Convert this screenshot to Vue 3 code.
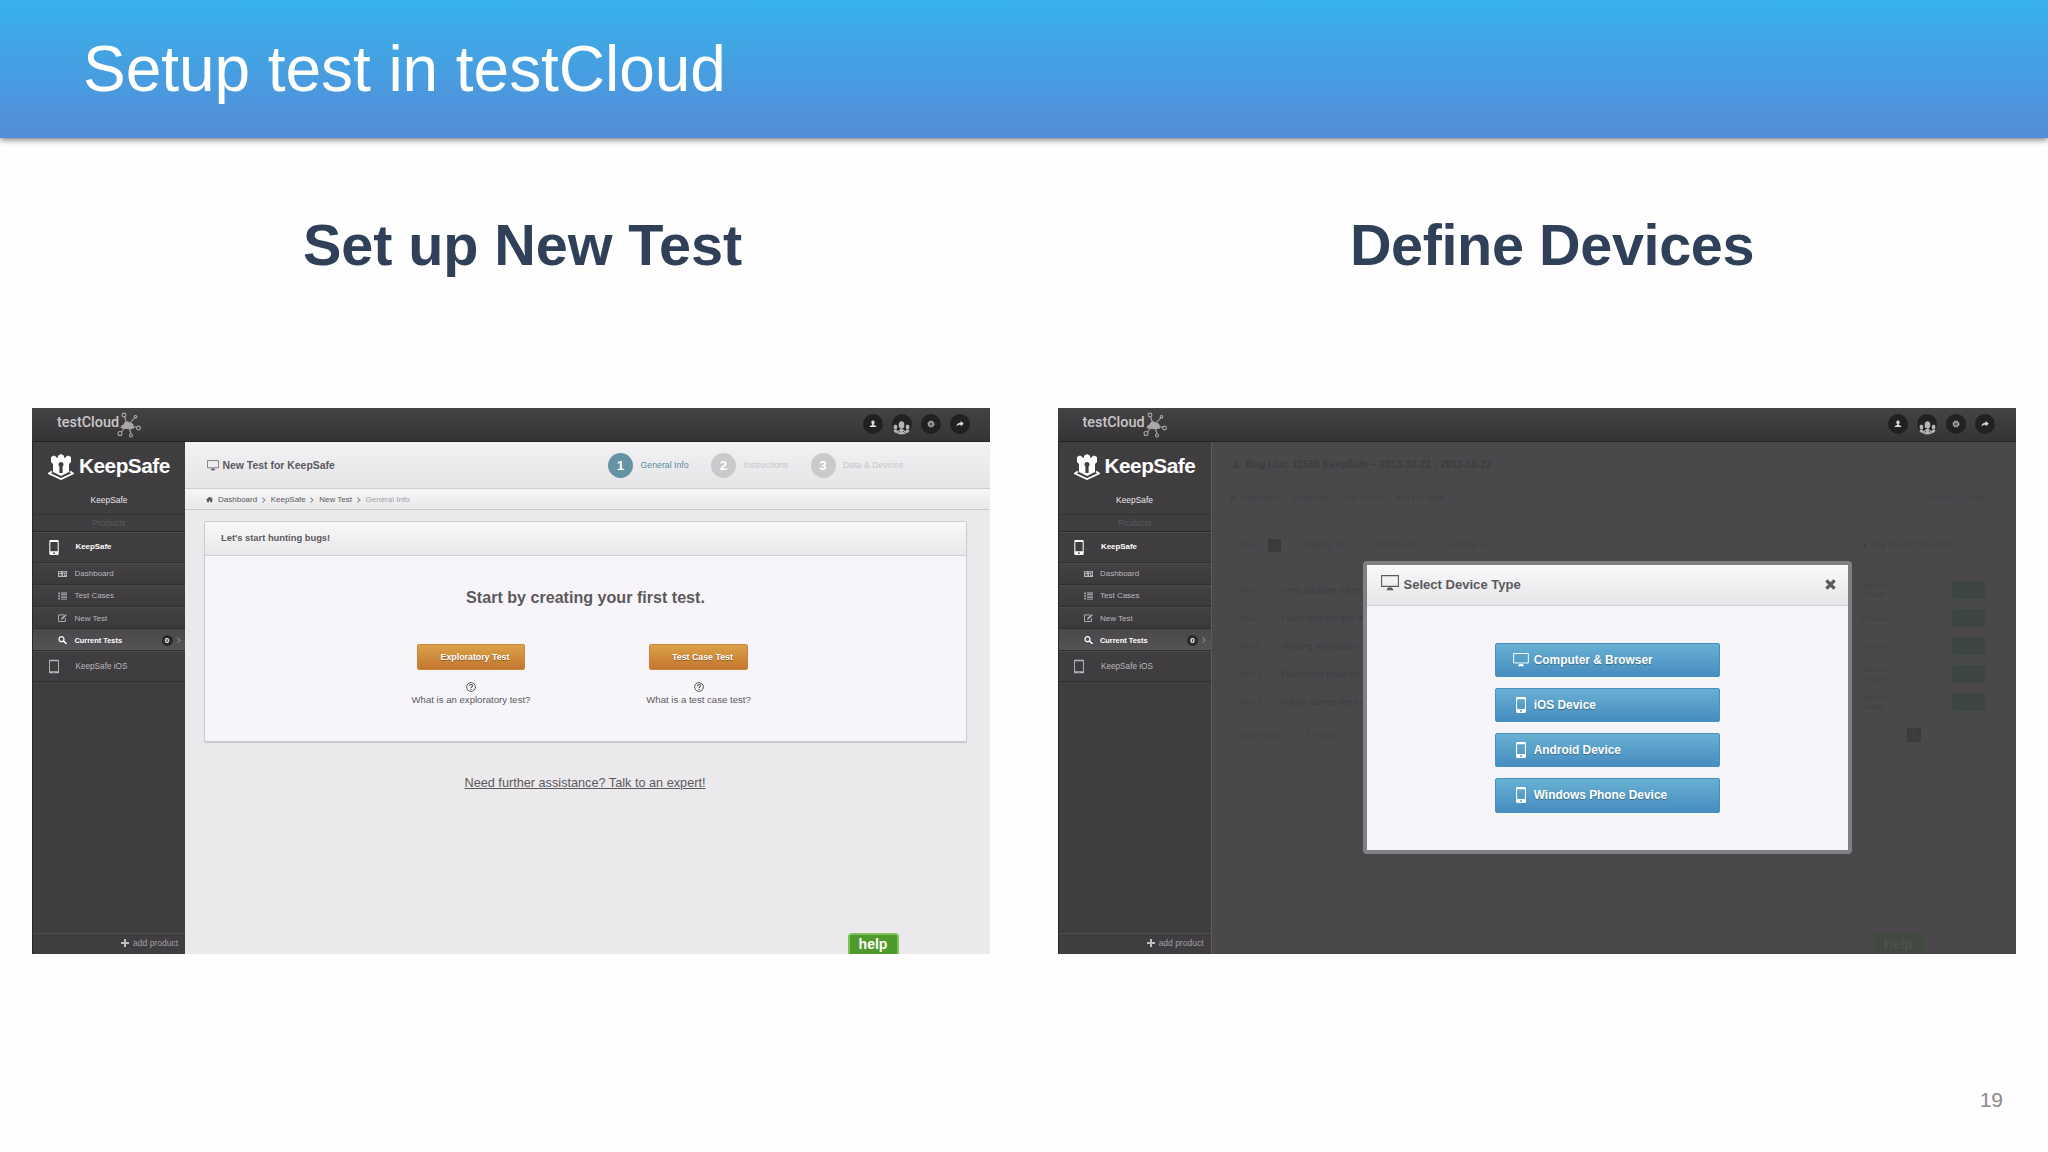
<template>
  <div class="slide">
    <svg class="sprite" width="0" height="0">
      <symbol id="i-monitor" viewBox="0 0 18 16">
        <path d="M.6.6h16.8v10.8H.6z" fill="none" stroke="currentColor" stroke-width="1.1" />
        <path d="M7 12.6h4l1.6 2.6H5.4z" fill="currentColor" />
      </symbol>
      <symbol id="i-phone" viewBox="0 0 10 16">
        <path fill-rule="evenodd" fill="currentColor" d="M1.4 0h7.2Q10 0 10 1.4v13.2Q10 16 8.6 16H1.4Q0 16 0 14.6V1.4Q0 0 1.4 0zM1.1 2.2v9.9h7.8V2.2zM5 13.1a.9.9 0 1 0 0 1.8.9.9 0 0 0 0-1.8z" />
      </symbol>
      <symbol id="i-tablet" viewBox="0 0 11 15">
        <path fill-rule="evenodd" fill="currentColor" d="M1 0h9q1 0 1 1v13q0 1-1 1H1q-1 0-1-1V1q0-1 1-1zM1 1.7v11h9v-11zM5.5 13.2a.6.6 0 1 0 0 1.2.6.6 0 0 0 0-1.2z" />
      </symbol>
      <symbol id="i-dashboard" viewBox="0 0 9 7">
        <path fill-rule="evenodd" fill="currentColor" d="M0 .4h9v6.2H0zM.8 1.3v1.2h2V1.3zM1.2 3.4v1.8h2.2V3.4zM4.4 1.3v.7h3.8v-.7zM5 3v2.4h1.2V3zM7 3v1.6h1.2V3z" />
      </symbol>
      <symbol id="i-list" viewBox="0 0 9 8">
        <path fill="currentColor" d="M.3.6h1.6v1.6H.3zM.3 3.2h1.6v1.6H.3zM.3 5.8h1.6v1.6H.3zM3 .5h6v.9H3zM3 2.2h6V3H3zM3 3.8h6v.8H3zM3 5.3h6v.8H3zM3 6.8h6v.8H3z" />
      </symbol>
      <symbol id="i-edit" viewBox="0 0 9 8">
        <path d="M6.2.9H.5v6.6h6.900V4.200" fill="none" stroke="currentColor" stroke-width=".9" />
        <path d="M3 5.7l.4-1.700L7.700.2l1 1L4.600 5.200z" fill="currentColor" />
      </symbol>
      <symbol id="i-search" viewBox="0 0 9 8">
        <circle cx="3.5" cy="3.2" r="2.5" fill="none" stroke="currentColor" stroke-width="1.2" />
        <path d="M5.3 4.9l2.9 2.6" stroke="currentColor" stroke-width="1.5" stroke-linecap="round" />
      </symbol>
      <symbol id="i-home" viewBox="0 0 8 7">
        <path fill="currentColor" d="M0 3.8L4 .3l1.5 1.3V.8h1v1.7L8 3.8l-.5.5L7 3.9v2.8H4.8V4.6H3.4v2.1H1.1V3.9l-.6.4z" />
      </symbol>
      <symbol id="i-user" viewBox="0 0 8 8">
        <path fill="currentColor" d="M4 .4c1.2 0 1.7.9 1.6 2-.1.9-.4 1.5-.8 1.9v.6c1.4.3 2.6.7 2.6 2.2H.6c0-1.5 1.2-1.9 2.6-2.2v-.6c-.4-.4-.7-1-.8-1.9-.1-1.1.4-2 1.6-2z" />
      </symbol>
      <symbol id="i-users" viewBox="0 0 16 13">
        <g fill="currentColor">
          <ellipse cx="8" cy="3.7" rx="2.7" ry="3.5" />
          <ellipse cx="2.3" cy="5.6" rx="1.8" ry="2.5" />
          <ellipse cx="13.7" cy="5.6" rx="1.8" ry="2.5" />
          <path d="M.6 8.3l2.4-.5 1.3 1.600 2.700-2h2l2.700 2L13 7.800l2.400.5c0 1.700-1 2.600-2.600 2.700-.9 1-2.700 1.500-4.800 1.500S4.100 12 3.200 11C1.600 10.900.6 10 .6 8.300z" />
        </g>
        <path d="M5 10.700l1.700-1.500M11 10.700L9.300 9.200" stroke="#222" stroke-width=".7" />
      </symbol>
      <symbol id="i-gear" viewBox="0 0 8 8">
        <circle cx="4" cy="4" r="2.3" fill="none" stroke="currentColor" stroke-width="1.5" />
        <circle cx="4" cy="4" r="3.1" fill="none" stroke="currentColor" stroke-width="1" stroke-dasharray="1.3 1.13" />
        <circle cx="4" cy="4" r=".8" fill="currentColor" />
      </symbol>
      <symbol id="i-share" viewBox="0 0 8 8">
        <path fill="currentColor" d="M4.700 1L7.800 3.700 4.700 6.300V4.800C2.800 4.700 1.500 5.100.4 6.800.5 4.200 2 2.700 4.700 2.500z" />
      </symbol>
      <symbol id="i-plus" viewBox="0 0 8 8">
        <path fill="currentColor" d="M3 0h2v3h3v2H5v3H3V5H0V3h3z" />
      </symbol>
      <symbol id="i-close" viewBox="0 0 10 10">
        <path d="M1.300 1.300l7.400 7.400M8.700 1.300L1.300 8.700" stroke="currentColor" stroke-width="3" />
      </symbol>
      <symbol id="i-question" viewBox="0 0 10 10">
        <circle cx="5" cy="5" r="4.4" fill="none" stroke="currentColor" stroke-width="1" />
        <path d="M3.500 4c0-2 3.100-2 3.100-.2C6.600 5 5 4.900 5 6.200M5 6.900v1" fill="none" stroke="currentColor" stroke-width="1.1" />
      </symbol>
      <symbol id="i-splat" viewBox="0 0 24 26">
        <g fill="none" stroke="currentColor" stroke-width="1.1">
          <path d="M10 12L7.500 4.500M13 11l5-5.500M14 14l6 1.500M12 15l2 7M9 14l-4.500 6" />
          <circle cx="7" cy="3" r="1.9" />
          <circle cx="18.5" cy="4.8" r="1.3" />
          <circle cx="21.5" cy="16" r="1.9" />
          <circle cx="14" cy="23.5" r="1.5" />
          <circle cx="3" cy="21.5" r="2" />
        </g>
        <path fill="currentColor" d="M3.500 16c.3-2 1.500-3 3-3.500C7 9.500 11 8.500 13 11c2.500-.5 4.200 1.300 3.500 3.500 1 .8.500 2-.5 2.300-3 .7-9 .4-12.500-.8z" />
      </symbol>
      <symbol id="i-castle" viewBox="0 0 26 26">
        <path fill="#fff" d="M3 3l3-1.500L8.500 3v1L10 3.500V1.700L13 0l3 1.700v1.800l1.500.5V3L20 1.500 23 3v5l-2 2v8l-8 4-8-4v-8L3 8z" />
        <path fill="none" stroke="#fff" stroke-width="1.9" d="M4 17.500l-3 2L13 25l12-5.500-3-2" />
        <path fill="#3f3d40" d="M13 8a2.500 2.500 0 0 1 2.500 2.500c0 .9-.4 1.500-.9 2V19h-3.200v-6.500c-.5-.5-.9-1.100-.9-2A2.500 2.500 0 0 1 13 8z" />
      </symbol>
    </svg>

    <header class="slide-header">
      <h1>Setup test in testCloud</h1>
    </header>

    <main class="columns">
      <section v-for="panel in panels" :key="panel.id" class="column" :class="panel.id">
        <h2>{{ panel.heading }}</h2>

        <div class="app">
          <div class="topbar">
            <span class="brand">testCloud</span>
            <svg class="splat"><use href="#i-splat" /></svg>
            <div class="actions">
              <span v-for="icon in topIcons" :key="icon" class="round" :class="icon">
                <svg><use :href="'#i-' + icon" /></svg>
              </span>
            </div>
          </div>

          <div class="body">
            <aside class="sidebar">
              <div class="logo">
                <svg><use href="#i-castle" /></svg>
                <span>KeepSafe</span>
              </div>
              <div class="company">KeepSafe</div>
              <div class="products">Products</div>
              <div class="product active">
                <svg class="phone"><use href="#i-phone" /></svg>
                <span>KeepSafe</span>
              </div>
              <div v-for="item in menu" :key="item.label" class="menu-item" :class="{ current: item.count !== undefined }">
                <svg><use :href="'#i-' + item.icon" /></svg>
                <span>{{ item.label }}</span>
                <template v-if="item.count !== undefined">
                  <b class="count">{{ item.count }}</b>
                  <i class="chevron"></i>
                </template>
              </div>
              <div class="product">
                <svg class="tablet"><use href="#i-tablet" /></svg>
                <span>KeepSafe iOS</span>
              </div>
              <div class="add-product">
                <svg><use href="#i-plus" /></svg>
                <span>add product</span>
              </div>
            </aside>

            <!-- new test page -->
            <div v-if="panel.id === 'setup'" class="page">
              <div class="page-header">
                <div class="page-title">
                  <svg><use href="#i-monitor" /></svg>
                  <span>New Test for KeepSafe</span>
                </div>
                <div v-for="(step, i) in steps" :key="step" class="step" :class="{ on: i === 0 }">
                  <b>{{ i + 1 }}</b>
                  <span>{{ step }}</span>
                </div>
              </div>
              <div class="crumbs">
                <svg><use href="#i-home" /></svg>
                <template v-for="(crumb, i) in crumbs" :key="crumb">
                  <i v-if="i > 0" class="chevron"></i>
                  <span :class="{ last: i === crumbs.length - 1 }">{{ crumb }}</span>
                </template>
              </div>
              <div class="card">
                <div class="card-title"><span>Let's start hunting bugs!</span></div>
                <div class="card-body">
                  <h3>Start by creating your first test.</h3>
                  <div class="choices">
                    <div v-for="choice in choices" :key="choice.label" class="choice">
                      <button>{{ choice.label }}</button>
                      <svg><use href="#i-question" /></svg>
                      <span>{{ choice.hint }}</span>
                    </div>
                  </div>
                </div>
              </div>
              <div class="assist"><a>Need further assistance? Talk to an expert!</a></div>
              <div class="help">help</div>
            </div>

            <!-- bug list behind the overlay -->
            <div v-else class="page dimmed">
              <div class="dim-title">
                <svg><use href="#i-user" /></svg>
                <span>Bug List: 11585 KeepSafe – 2013-10-21 - 2013-10-22</span>
              </div>
              <div class="dim-crumbs">
                <svg><use href="#i-home" /></svg>
                <span v-for="crumb in dimCrumbs" :key="crumb">{{ crumb }}</span>
                <span class="push">Refresh</span>
                <span>Help</span>
              </div>
              <div class="dim-tabs">
                <span>Open</span><b>1</b>
                <span>Waiting 11</span>
                <span>Published 0</span>
                <span>Usability 0</span>
                <span class="push">● Bug Report Download</span>
              </div>
              <div class="dim-table">
                <div v-for="bug in bugs" :key="bug.id" class="dim-row">
                  <span>{{ bug.id }}</span>
                  <b>{{ bug.title }}</b>
                  <span class="status">{{ bug.status }}</span>
                  <i></i>
                </div>
              </div>
              <div class="dim-pager">
                <span>10 per page</span>
                <span>5 entries</span>
                <b>1</b>
              </div>
              <div class="help">help</div>
            </div>
          </div>

          <div v-if="panel.id === 'devices'" class="modal">
            <div class="modal-header">
              <svg class="monitor"><use href="#i-monitor" /></svg>
              <span>Select Device Type</span>
              <svg class="close"><use href="#i-close" /></svg>
            </div>
            <div class="modal-body">
              <button v-for="device in devices" :key="device.label">
                <svg :class="device.icon"><use :href="'#i-' + device.icon" /></svg>
                <span>{{ device.label }}</span>
              </button>
            </div>
          </div>
        </div>
      </section>
    </main>

    <footer>19</footer>
  </div>
</template>

<script setup>
const panels = [
  { id: 'setup', heading: 'Set up New Test' },
  { id: 'devices', heading: 'Define Devices' },
];

const topIcons = ['user', 'users', 'gear', 'share'];

const menu = [
  { icon: 'dashboard', label: 'Dashboard' },
  { icon: 'list', label: 'Test Cases' },
  { icon: 'edit', label: 'New Test' },
  { icon: 'search', label: 'Current Tests', count: 0 },
];

const steps = ['General Info', 'Instructions', 'Data & Devices'];
const crumbs = ['Dashboard', 'KeepSafe', 'New Test', 'General Info'];

const choices = [
  { label: 'Exploratory Test', hint: 'What is an exploratory test?' },
  { label: 'Test Case Test', hint: 'What is a test case test?' },
];

const dimCrumbs = ['Dashboard', 'KeepSafe', 'Test 11585', 'Bug List Table'];

const bugs = [
  { id: '#6437', title: 'Crop package when saving', status: 'Open for retest' },
  { id: '#6427', title: 'I can\'t use the app in', status: 'Review' },
  { id: '#6431', title: 'Missing translation', status: 'Review' },
  { id: '#6415', title: 'Placement issue on', status: 'Open for retest' },
  { id: '#6411', title: 'Folder names does not', status: 'Open for retest' },
];

const devices = [
  { icon: 'monitor', label: 'Computer & Browser' },
  { icon: 'phone', label: 'iOS Device' },
  { icon: 'phone', label: 'Android Device' },
  { icon: 'phone', label: 'Windows Phone Device' },
];
</script>

<style>
body {
  margin: 0;
  background: #fdfdfd;
}
</style>

<style scoped>
* {
  box-sizing: border-box;
}

.slide {
  display: flex;
  flex-direction: column;
  width: 2048px;
  height: 1152px;
  overflow: hidden;
  background: #fefefe;
  font-family: "Liberation Sans", Arial, Helvetica, sans-serif;
}

.sprite {
  position: absolute;
}

svg {
  display: block;
  flex: none;
}

span,
a {
  white-space: nowrap;
}

.slide-header {
  flex: none;
  height: 138px;
  padding: 32px 0 0 83px;
  background: linear-gradient(#38b2ea, #548cd8);
  box-shadow: 0 2px 6px rgba(0, 0, 0, 0.5);
}

h1 {
  margin: 0;
  font-size: 64px;
  font-weight: 400;
  line-height: 74px;
  letter-spacing: -0.05px;
  color: #fff;
}

.columns {
  display: grid;
  grid-template-columns: 958px 958px;
  column-gap: 67.5px;
  padding-left: 32px;
}

.column h2 {
  margin: 0;
  padding-top: 74px;
  height: 269.5px;
  font-size: 57.6px;
  line-height: 66px;
  text-align: center;
  letter-spacing: -0.1px;
  color: #2f4058;
}

.setup h2 {
  padding-left: 23px;
}

.devices h2 {
  padding-left: 31px;
  letter-spacing: -0.4px;
}

.app {
  position: relative;
  display: flex;
  flex-direction: column;
  height: 546px;
  overflow: hidden;
  background: #3f3d40;
}

/* top bar */
.topbar {
  display: flex;
  align-items: center;
  flex: none;
  height: 34.5px;
  padding-left: 25px;
  background: linear-gradient(#454346, #353336);
  border-bottom: 1px solid #262427;
}

.brand {
  margin-top: -3px;
  font-family: Roboto, "Liberation Sans", sans-serif;
  font-size: 14.4px;
  font-weight: 500;
  color: #c9c7ca;
}

.splat {
  width: 24px;
  height: 26px;
  margin: 2px 0 0 -2px;
  color: #a9a7aa;
}

.actions {
  display: flex;
  gap: 9px;
  margin: 0 20.5px 0 auto;
}

.round {
  display: flex;
  align-items: center;
  justify-content: center;
  width: 20px;
  height: 20px;
  border-radius: 50%;
  background: #222023;
  color: #dddbde;
}

.round svg {
  width: 8px;
  height: 8px;
}

.round.users svg {
  width: 17px;
  height: 14px;
  margin-top: 7px;
  color: #b5b3b6;
}

.round.gear {
  color: #a9a7aa;
}

.body {
  display: flex;
  flex: 1;
}

/* sidebar */
.sidebar {
  display: flex;
  flex-direction: column;
  flex: none;
  width: 153px;
  background: #3f3d40;
  border-left: 1px solid #2a282b;
}

.logo {
  display: flex;
  align-items: center;
  height: 49px;
  padding: 0 0 2px 15px;
}

.logo svg {
  width: 26px;
  height: 26px;
  margin-top: 2px;
}

.logo span {
  margin-left: 5px;
  font-size: 20.8px;
  font-weight: 700;
  letter-spacing: -0.5px;
  color: #fff;
}

.company {
  height: 23.5px;
  line-height: 18px;
  text-align: center;
  font-size: 8.4px;
  color: #e9e7ea;
  border-bottom: 1px solid #353336;
}

.products {
  height: 17px;
  line-height: 17px;
  text-align: center;
  font-size: 8.5px;
  color: #5b595c;
  border-bottom: 1px solid #2c2a2d;
}

.product {
  display: flex;
  align-items: center;
  height: 31px;
  padding-left: 15.5px;
  font-size: 8.2px;
  color: #b9b7ba;
  border-top: 1px solid #4b494c;
  border-bottom: 1px solid #302e31;
}

.product svg {
  width: 10px;
  height: 15px;
}

.product span {
  margin-left: 17px;
}

.product.active {
  font-weight: 700;
  font-size: 7.9px;
  color: #fff;
}

.active span {
  margin-top: -1px;
}

.menu-item {
  display: flex;
  align-items: center;
  height: 22.3px;
  padding-left: 25px;
  font-size: 8px;
  color: #b9b7ba;
  background: linear-gradient(#434144, #3b393c);
  border-top: 1px solid #4a484b;
  border-bottom: 1px solid #302e31;
}

.menu-item svg {
  width: 9px;
  height: 8px;
  margin-right: 7.5px;
}

.menu-item.current {
  height: 21.5px;
  color: #fff;
  background: linear-gradient(#4a484b, #555356);
}

.current span {
  font-weight: 700;
  font-size: 7.4px;
}

.count {
  width: 11px;
  height: 11px;
  margin-left: auto;
  border-radius: 50%;
  background: #2b292c;
  font-size: 8px;
  line-height: 11px;
  text-align: center;
}

.chevron {
  flex: none;
  width: 3.5px;
  height: 3.5px;
  border-top: 1px solid #8b898c;
  border-right: 1px solid #8b898c;
  transform: rotate(45deg);
}

.current .chevron {
  margin: 0 6px 0 3px;
}

.add-product {
  display: flex;
  align-items: center;
  justify-content: flex-end;
  gap: 4px;
  height: 21px;
  margin-top: auto;
  padding: 0 7px 2px 0;
  font-size: 8.5px;
  color: #a19fa2;
  border-top: 1px solid #4f4d50;
}

.add-product svg {
  width: 8px;
  height: 8px;
  color: #c1bfc2;
}

/* new test page */
.page {
  position: relative;
  display: flex;
  flex-direction: column;
  flex: 1;
  min-width: 0;
  background: #ebe9ec;
  color: #5b595c;
}

.page-header {
  display: grid;
  grid-template-columns: 423px 103px 99.5px 1fr;
  align-items: center;
  height: 47px;
  background: linear-gradient(#f2f1f3, #e5e4e7);
  border-bottom: 1px solid #cfcdd0;
}

.page-title {
  display: flex;
  align-items: center;
  gap: 4px;
  padding-left: 21.5px;
  font-size: 10.45px;
  font-weight: 700;
}

.page-title svg {
  width: 12px;
  height: 11px;
}

.step {
  display: flex;
  align-items: center;
  gap: 7.5px;
  font-size: 8.75px;
  color: #c9c7ca;
}

.step b {
  width: 25px;
  height: 25px;
  border-radius: 50%;
  background: #cbc9cc;
  font-size: 13.5px;
  line-height: 25px;
  text-align: center;
  color: #fff;
}

.step.on {
  color: #5c8ea1;
}

.step.on b {
  background: #6593a4;
}

.crumbs {
  display: flex;
  align-items: center;
  height: 20.5px;
  padding: 2px 0 0 21px;
  font-size: 8px;
  background: linear-gradient(#f6f5f7, #e9e8eb);
  border-bottom: 1px solid #cbc9cc;
}

.crumbs svg {
  width: 7px;
  height: 7px;
  margin-right: 5px;
}

.crumbs .chevron {
  margin: 0 6.5px 0 3.5px;
}

.crumbs .last {
  color: #a3a1a4;
}

.card {
  width: 763px;
  height: 221px;
  margin: 11px 0 0 19px;
  border: 1px solid #cecccf;
  border-radius: 2px;
  background: #f7f5f9;
  box-shadow: 0 1px 1px rgba(0, 0, 0, 0.15);
}

.card-title {
  height: 34px;
  padding-left: 16px;
  line-height: 33px;
  font-size: 9.35px;
  font-weight: 700;
  background: linear-gradient(#f8f7f9, #e8e7ea);
  border-bottom: 1px solid #d2d0d3;
}

.card-body h3 {
  margin: 31px 0 0;
  font-size: 16.1px;
  line-height: 20px;
  text-align: center;
}

.choices {
  display: grid;
  grid-template-columns: 120px 104px;
  column-gap: 115.5px;
  margin: 37.5px 0 0 206px;
}

.choice {
  display: flex;
  flex-direction: column;
  align-items: center;
  font-size: 9.6px;
}

.choice button {
  padding: 0 14.5px 0 22.5px;
  height: 25.5px;
  border: 1px solid #c9853c;
  border-radius: 2px;
  background: linear-gradient(#dba247, #c5762f);
  font: 700 8.8px "Liberation Sans", Arial, sans-serif;
  color: #fff;
  text-shadow: 0 1px 1px rgba(0, 0, 0, 0.35);
}

.choice svg {
  width: 10px;
  height: 10px;
  margin: 12px 0 2px;
}

.assist {
  margin-top: 34.5px;
  padding-left: 18px;
  text-align: center;
  font-size: 12.7px;
  line-height: 15px;
  width: 782px;
}

.assist a {
  text-decoration: underline;
}

.help {
  position: absolute;
  right: 91.5px;
  bottom: 0;
  width: 51px;
  height: 21px;
  border: 2px solid #7fc05b;
  border-bottom: 0;
  border-radius: 4px 4px 0 0;
  background: #4f9a2d;
  font-size: 14px;
  font-weight: 700;
  line-height: 19px;
  text-align: center;
  color: #fff;
}

/* dimmed bug list */
.dimmed {
  background: #4a484b;
  border-left: 1px solid #5c5a5d;
  padding: 0 30px 0 27px;
  font-size: 8.5px;
  color: #424043;
}

.dimmed .push {
  margin-left: auto;
}

.dim-title {
  display: flex;
  align-items: center;
  gap: 5px;
  height: 44px;
  margin-left: -7px;
  font-size: 10.1px;
  font-weight: 700;
  color: #3f3d40;
}

.dim-title svg {
  width: 9px;
  height: 9px;
}

.dim-crumbs {
  display: flex;
  align-items: center;
  gap: 14px;
  height: 23px;
  margin-left: -9px;
  font-size: 8px;
}

.dim-crumbs svg {
  width: 6px;
  height: 6px;
  margin-right: -9px;
}

.dim-tabs {
  display: flex;
  align-items: center;
  gap: 29px;
  height: 36px;
  margin-top: 18px;
  padding-right: 32px;
}

.dim-tabs b {
  width: 13px;
  margin: 0 -6px 0 -20px;
  line-height: 13px;
  text-align: center;
  background: #3c3a3d;
}

.dim-table {
  margin-top: 13px;
}

.dim-row {
  display: flex;
  align-items: center;
  height: 28px;
}

.dim-row b {
  width: 574px;
  margin-left: 19px;
  white-space: nowrap;
}

.dim-row .status {
  width: 40px;
  font-size: 8px;
  line-height: 9px;
  text-align: center;
  white-space: normal;
}

.dim-row i {
  width: 34px;
  height: 18px;
  margin-left: auto;
  border-radius: 2px;
  background: #3e4643;
}

.dim-pager {
  display: flex;
  align-items: center;
  gap: 22px;
  height: 30px;
  margin-top: 4px;
  color: #444245;
}

.dim-pager b {
  width: 14px;
  margin: 0 65px 0 auto;
  line-height: 14px;
  text-align: center;
  background: #3c3a3d;
}

.dimmed .help {
  background: #414941;
  border-color: #434a42;
  color: #4b534a;
}

/* device picker */
.modal {
  position: absolute;
  left: 305px;
  top: 153px;
  width: 489.5px;
  height: 293px;
  border: 4px solid #828083;
  border-radius: 4px;
  background: #f5f4f8;
  color: #5b595c;
}

.modal-header {
  display: flex;
  align-items: center;
  height: 41px;
  padding: 0 12px 0 14.5px;
  font-size: 13.05px;
  font-weight: 700;
  background: linear-gradient(#f9f8fa, #e6e5e8);
  border-bottom: 1px solid #cfcdd0;
}

.modal-header .monitor {
  width: 18px;
  height: 16px;
  margin: -4px 4.5px 0 0;
}

.modal-header .close {
  width: 11px;
  height: 11px;
  margin-left: auto;
}

.modal-body {
  display: flex;
  flex-direction: column;
  align-items: center;
  gap: 10.8px;
  padding-top: 37.5px;
}

.modal-body button {
  display: flex;
  align-items: center;
  width: 225px;
  height: 34.3px;
  padding: 0 0 0 17px;
  border: 1px solid #4b8fbd;
  border-radius: 2px;
  background: linear-gradient(#68b0d3, #468dc0);
  font: 700 11.9px "Liberation Sans", Arial, sans-serif;
  color: #fff;
  text-shadow: 0 1px 1px rgba(0, 0, 0, 0.3);
}

.modal-body button svg {
  width: 16px;
  height: 14px;
  margin-right: 5px;
}

.modal-body button .phone {
  width: 10px;
  height: 16px;
  margin: 0 8px 0 3px;
}

footer {
  margin: auto 45px 39px 0;
  font-size: 21px;
  line-height: 26px;
  text-align: right;
  color: #8b898c;
}
</style>
